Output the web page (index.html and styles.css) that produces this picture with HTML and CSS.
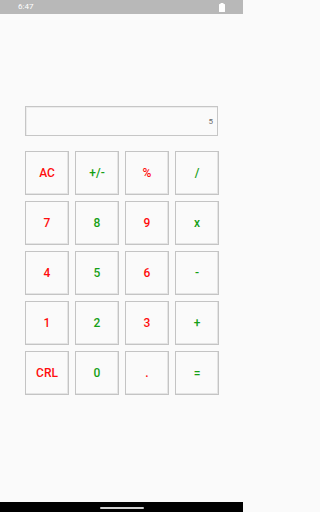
FILE: index.html
```html
<!DOCTYPE html>
<html>
<head>
<meta charset="utf-8">
<link rel="stylesheet" href="styles.css">
</head>
<body>
<div class="status">
  <span class="time">6:47</span>
  <svg class="battery" width="6" height="9" viewBox="0 0 6 9"><rect x="1.5" y="0" width="3" height="1" fill="#fff"/><rect x="0" y="1" width="6" height="8" rx="0.5" fill="#fff"/></svg>
</div>
<main class="app">
  <div class="display"><span>5</span></div>
  <div class="keys">
    <button class="key red">AC</button>
    <button class="key green">+/-</button>
    <button class="key red">%</button>
    <button class="key green">/</button>
    <button class="key red">7</button>
    <button class="key green">8</button>
    <button class="key red">9</button>
    <button class="key green">x</button>
    <button class="key red">4</button>
    <button class="key green">5</button>
    <button class="key red">6</button>
    <button class="key green">-</button>
    <button class="key red">1</button>
    <button class="key green">2</button>
    <button class="key red">3</button>
    <button class="key green">+</button>
    <button class="key red">CRL</button>
    <button class="key green">0</button>
    <button class="key red">.</button>
    <button class="key green">=</button>
  </div>
</main>
<div class="navbar"><div class="handle"></div></div>
</body>
</html>
```
FILE: styles.css
```css
html {
  margin: 0;
  padding: 0;
  background: #fafafa;
}
body {
  margin: 0;
  padding: 0;
  width: 243px;
  height: 512px;
  display: flex;
  flex-direction: column;
  background: #fafafa;
  font-family: Roboto, "Liberation Sans", sans-serif;
  overflow: hidden;
}
.status {
  height: 14px;
  flex: none;
  background: #b8b8b8;
  display: flex;
  align-items: center;
  justify-content: space-between;
  padding: 0 18px 0 18px;
  box-sizing: border-box;
}
.time {
  color: #fff;
  font-size: 8px;
  line-height: 14px;
}
.battery {
  display: block;
  margin-top: 1px;
}
.app {
  flex: 1;
  display: flex;
  flex-direction: column;
  align-items: flex-start;
  padding: 92px 0 0 25px;
}
.display {
  width: 193px;
  height: 30px;
  box-sizing: border-box;
  border: 1px solid #c6c6c6;
  box-shadow: inset 1px 1px 0 #ececec;
  display: flex;
  align-items: center;
  justify-content: flex-end;
  padding-right: 4px;
  color: #6a6a6a;
  font-size: 8px;
}
.keys {
  margin-top: 15px;
  display: grid;
  grid-template-columns: repeat(4, 44px);
  grid-auto-rows: 44px;
  gap: 6px;
}
.key {
  margin: 0;
  padding: 0;
  box-sizing: border-box;
  border: 1px solid #c4c4c4;
  box-shadow: inset -1px -1px 0 #e4e4e4;
  background: #fafafa;
  font-family: Roboto, "Liberation Sans", sans-serif;
  font-size: 12px;
  font-weight: 500;
}
.red { color: #ff0d0d; }
.green { color: #16a016; }
.navbar {
  height: 10px;
  flex: none;
  background: #000;
  display: flex;
  justify-content: center;
  padding-top: 5px;
  box-sizing: border-box;
}
.handle {
  width: 44px;
  height: 2px;
  background: #d0d0d0;
  border-radius: 1px;
}
```
